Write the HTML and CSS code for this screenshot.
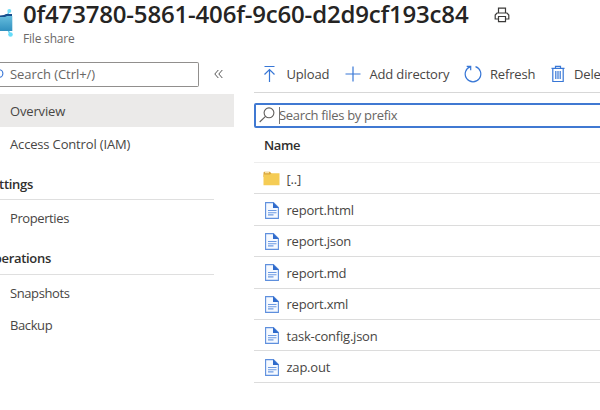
FILE: index.html
```html
<!DOCTYPE html>
<html lang="en">
<head>
<meta charset="utf-8">
<title>File share</title>
<link rel="stylesheet" href="styles.css">
</head>
<body>
<svg class="defs" width="0" height="0" aria-hidden="true">
  <symbol id="file" viewBox="0 0 14 17">
    <path d="M.6.6H8.4L13.4 5.6V16.4H.6Z" fill="#f5f9ff" stroke="#5e8fdd" stroke-width="1.1"/>
    <path d="M8 .2 13.8 6H8Z" fill="#2f6acb"/>
    <path d="M3 8.5H11.5M3 10.7H11.5M3 12.9H8.5" stroke="#6d9ae2" stroke-width="1.1"/>
  </symbol>
</svg>
<header class="header">
  <svg class="share-icon" width="14" height="31" viewBox="0 0 14 31">
    <defs><linearGradient id="blue" x1="0" y1="0" x2="0" y2="1"><stop offset="0" stop-color="#65bddd"/><stop offset="1" stop-color="#3190bf"/></linearGradient></defs>
    <path d="M7 9 9.500 3.500M7.500 22 10 27" stroke="#62cfee" stroke-width="1.500"/>
    <path d="M0 8.500 4 8 6 7H12V12H0Z" fill="#164f8d"/>
    <path d="M0 10H5L7 9H12.300V24H0Z" fill="url(#blue)"/>
    <circle cx="9.300" cy="4" r="2" fill="#75def8"/><circle cx="10.500" cy="27.500" r="2.300" fill="#65ddfa"/>
  </svg>
  <div class="heading">
    <h1 class="title">0f473780-5861-406f-9c60-d2d9cf193c84</h1>
    <div class="subtitle">File share</div>
  </div>
  <svg class="print" width="16" height="16" viewBox="0 0 16 16" fill="none" stroke="#3b3a39" stroke-width="1.200">
    <path d="M4.500 6V1.200H11.500V6M4 12H1.200V8L3 6H13L14.800 8V12H12M4.500 9.500H11.500V14.600H4.500Z"/>
  </svg>
</header>
<div class="layout">
  <nav class="sidebar">
    <div class="search-row">
      <div class="menu-search">
        <svg width="4" height="12" viewBox="0 0 4 12"><circle cx="-1" cy="5.500" r="3.900" fill="none" stroke="#3f7bd8" stroke-width="1.100"/></svg>
        <span>Search (Ctrl+/)</span>
      </div>
      <svg width="9" height="10" viewBox="0 0 9 10" fill="none" stroke="#555" stroke-width="1"><path d="M4.300 1 .8 5 4.300 9M8.300 1 4.800 5 8.300 9"/></svg>
    </div>
    <div class="item active">Overview</div>
    <div class="item">Access Control (IAM)</div>
    <h2 class="group"><span class="clipped settings">Settings</span></h2>
    <div class="item tight">Properties</div>
    <h2 class="group"><span class="clipped operations">Operations</span></h2>
    <div class="item tight">Snapshots</div>
    <div class="item tight">Backup</div>
  </nav>
  <main class="main">
    <div class="toolbar">
      <div class="command upload"><svg width="16" height="18" viewBox="0 0 16 18"><path d="M2.500 1.500H12.500M7.500 17V5M2.500 9.500 7.500 4.500 12.500 9.500"/></svg><span>Upload</span></div>
      <div class="command add"><svg width="16" height="18" viewBox="0 0 16 18"><path d="M.5 9H15.500M8 1.500V16.500"/></svg><span>Add directory</span></div>
      <div class="command refresh"><svg width="18" height="18" viewBox="0 0 18 18"><path d="M11.500 1.600A7.800 7.800 0 1 1 6.500 1.600M2.700 1.300H6.700V5.300"/></svg><span>Refresh</span></div>
      <div class="command delete"><svg width="14" height="18" viewBox="0 0 14 18"><path d="M.5 3.300H13.500M4.500 3V1.300H9.500V3M1.800 3.300V16.500H12.200V3.300M4.800 6V14M7 6V14M9.200 6V14"/></svg><span>Delete</span></div>
    </div>
    <div class="file-search">
      <svg width="16" height="16" viewBox="0 0 16 16" fill="none" stroke="#605e5c" stroke-width="1.100"><circle cx="10" cy="5.800" r="4.900"/><path d="M6.500 9.300.7 15"/></svg>
      <span class="caret"></span><span class="placeholder">Search files by prefix</span>
    </div>
    <div class="table">
      <div class="row head">Name</div>
      <div class="row"><svg class="folder" width="17" height="15" viewBox="0 0 17 15"><path d="M.5 2Q.5.700 1.500.7H7L8.500 2.500V6H.5Z" fill="#d9a741"/><path d="M2 1.700H6" stroke="#fff0bd"/><path d="M.5 3.500H7L8.500 2.300H16.500V14.300H.5Z" fill="#f5cc55"/></svg><span>[..]</span></div>
      <div class="row"><svg width="14" height="17"><use href="#file"/></svg><span>report.html</span></div>
      <div class="row"><svg width="14" height="17"><use href="#file"/></svg><span>report.json</span></div>
      <div class="row"><svg width="14" height="17"><use href="#file"/></svg><span>report.md</span></div>
      <div class="row"><svg width="14" height="17"><use href="#file"/></svg><span>report.xml</span></div>
      <div class="row"><svg width="14" height="17"><use href="#file"/></svg><span>task-config.json</span></div>
      <div class="row"><svg width="14" height="17"><use href="#file"/></svg><span>zap.out</span></div>
    </div>
  </main>
</div>
</body>
</html>
```
FILE: styles.css
```css
* { box-sizing: border-box; }
body { margin: 0; width: 600px; height: 410px; overflow: hidden; background: #fff; color: #484644; font: 13px/18px "Open Sans", "Noto Sans", sans-serif; letter-spacing: -0.16px; }
svg { display: block; flex: none; }
.defs { position: absolute; }
.header { display: flex; height: 54px; }
.share-icon { margin-top: 7px; }
.heading { width: 447px; margin-left: 9px; }
.title { margin: -2px 0 0; color: #252423; font-size: 24px; line-height: 32px; font-weight: 600; letter-spacing: -0.18px; white-space: nowrap; }
.subtitle { font-size: 12px; color: #6b6967; line-height: 18px; letter-spacing: -0.2px; }
.print { margin: 7px 0 0 24px; }
.layout { display: flex; }
.sidebar { width: 234px; flex: none; overflow: hidden; }
.search-row { display: flex; align-items: center; height: 40px; gap: 15px; }
.menu-search { display: flex; align-items: center; gap: 6px; width: 198.500px; height: 25px; border: 1px solid #918f8d; border-left: 0; border-radius: 0 2px 2px 0; color: #686664; letter-spacing: -0.05px; }
.item { height: 32.5px; padding-left: 10px; line-height: 34px; }
.tight { letter-spacing: -0.4px; }
.active { background: #ebeae9; }
.group { display: flex; align-items: center; width: 213.5px; height: 41px; margin: 0 0 1px; padding-top: 9px; border-bottom: 1px solid #dfdfdf; color: #302f2e; font-size: 13px; font-weight: 600; }
.clipped { display: flex; justify-content: flex-end; letter-spacing: -0.3px; }
.settings { width: 33px; }
.operations { width: 51px; }
.main { width: 346px; margin-left: 20px; overflow: hidden; flex: none; }
.toolbar { display: flex; height: 39px; border-bottom: 1px solid #d7d7d7; padding: 1px 0 0 8px; }
.command { display: flex; align-items: center; flex: none; }
.command svg { fill: none; stroke: #3877d6; stroke-width: 1.200; }
.upload { width: 83px; gap: 8.5px; }
.add { width: 119px; gap: 8.5px; }
.refresh { width: 87px; gap: 8px; }
.delete { gap: 9px; }
.file-search { display: flex; align-items: center; width: 360px; height: 24.5px; margin-top: 10px; border: 2px solid #4079d2; border-radius: 2px; padding-left: 3px; color: #686664; }
.caret { width: 1px; height: 17px; margin-left: 4px; background: #777; }
.placeholder { letter-spacing: -0.32px; margin-left: -1px; }
.row { display: flex; align-items: center; height: 31.400px; border-bottom: 1px solid #dcdcdc; padding: 1px 0 0 11px; gap: 7.500px; letter-spacing: -0.22px; white-space: nowrap; }
.head { height: 35.500px; padding: 0 0 0 10px; border-color: #ededed; color: #302f2e; font-weight: 600; letter-spacing: -0.35px; }
.folder { margin: 0 -1px 0 -2px; }
```
